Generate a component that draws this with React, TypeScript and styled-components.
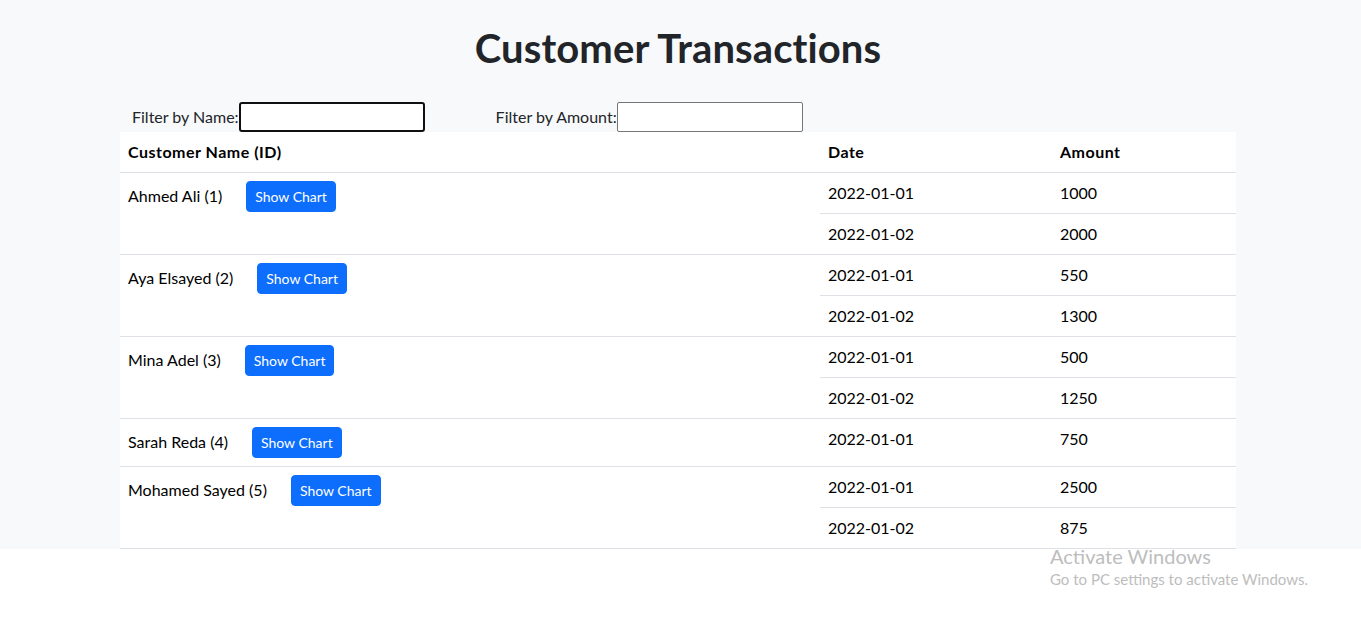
import React from "react";
import styled, { createGlobalStyle } from "styled-components";

const GlobalStyle = createGlobalStyle`
  html, body {
    margin: 0;
    padding: 0;
    background: #ffffff;
  }
  body {
    font-family: "Lato", "Segoe UI", "Liberation Sans", sans-serif;
    font-size: 16px;
    line-height: 24px;
    color: #212529;
  }
  * { box-sizing: border-box; }
`;

const Page = styled.div`
  background: #f8f9fa;
  padding-left: 120px;
  padding-top: 24px;
`;

const Container = styled.div`
  width: 1116px;
`;

const Title = styled.h1`
  margin: 0 0 30px;
  text-align: center;
  font-size: 40px;
  line-height: 48px;
  font-weight: 700;
  letter-spacing: 0.1px;
  color: #212529;
`;

const FilterRow = styled.div`
  display: flex;
  align-items: center;
  gap: 71px;
  padding-left: 12px;
  height: 30px;
`;

const FilterGroup = styled.label`
  display: flex;
  align-items: center;
  color: #212529;
  font-size: 16px;
`;

const FilterInput = styled.input<{ $active?: boolean }>`
  width: 186px;
  height: 30px;
  margin: 0;
  padding: 1px 2px;
  font: inherit;
  background: #ffffff;
  border: ${(p) => (p.$active ? "2px solid #101010" : "1px solid #767676")};
  border-radius: ${(p) => (p.$active ? "3px" : "2px")};
  outline: none;
`;

const Table = styled.table`
  width: 1116px;
  border-collapse: collapse;
  background: #ffffff;
  color: #000000;
  font-size: 16px;
  line-height: 24px;
  vertical-align: top;
`;

const HeadCell = styled.th<{ $width: number }>`
  width: ${(p) => p.$width}px;
  text-align: left;
  font-weight: 700;
  letter-spacing: 0.5px;
  padding: 8px;
  border-bottom: 1px solid #dee2e6;
`;

const Cell = styled.td`
  padding: 8px;
  border-bottom: 1px solid #dee2e6;
  vertical-align: top;
`;

const NameText = styled.span`
  vertical-align: baseline;
`;

const ChartButton = styled.button`
  display: inline-block;
  margin-left: 24px;
  padding: 4px 8px;
  font-family: inherit;
  font-size: 14px;
  line-height: 21px;
  color: #ffffff;
  background: #0d6efd;
  border: 1px solid #0d6efd;
  border-radius: 4px;
  cursor: pointer;
  vertical-align: baseline;
`;

const Watermark = styled.div`
  position: absolute;
  left: 1050px;
  top: 542px;
  color: #bdbdbd;
  font-family: "Lato", "Segoe UI", "Liberation Sans", sans-serif;
  pointer-events: none;
`;

const WatermarkTitle = styled.div`
  font-size: 20px;
  line-height: 28px;
`;

const WatermarkText = styled.div`
  font-size: 15px;
  line-height: 18px;
`;

type Tx = { date: string; amount: number };
type Customer = { id: number; name: string; txs: Tx[] };

const customers: Customer[] = [
  { id: 1, name: "Ahmed Ali", txs: [{ date: "2022-01-01", amount: 1000 }, { date: "2022-01-02", amount: 2000 }] },
  { id: 2, name: "Aya Elsayed", txs: [{ date: "2022-01-01", amount: 550 }, { date: "2022-01-02", amount: 1300 }] },
  { id: 3, name: "Mina Adel", txs: [{ date: "2022-01-01", amount: 500 }, { date: "2022-01-02", amount: 1250 }] },
  { id: 4, name: "Sarah Reda", txs: [{ date: "2022-01-01", amount: 750 }] },
  { id: 5, name: "Mohamed Sayed", txs: [{ date: "2022-01-01", amount: 2500 }, { date: "2022-01-02", amount: 875 }] },
];

export default function App() {
  return (
    <>
      <GlobalStyle />
      <Page>
        <Container>
          <Title>Customer Transactions</Title>
          <FilterRow>
            <FilterGroup>
              Filter by Name:
              <FilterInput type="text" $active />
            </FilterGroup>
            <FilterGroup>
              Filter by Amount:
              <FilterInput type="number" />
            </FilterGroup>
          </FilterRow>
          <Table>
            <thead>
              <tr>
                <HeadCell $width={700}>Customer Name (ID)</HeadCell>
                <HeadCell $width={232}>Date</HeadCell>
                <HeadCell $width={184}>Amount</HeadCell>
              </tr>
            </thead>
            <tbody>
              {customers.map((c) =>
                c.txs.map((t, i) => (
                  <tr key={`${c.id}-${i}`}>
                    {i === 0 && (
                      <Cell rowSpan={c.txs.length}>
                        <NameText>
                          {c.name} ({c.id})
                        </NameText>
                        <ChartButton type="button">Show Chart</ChartButton>
                      </Cell>
                    )}
                    <Cell>{t.date}</Cell>
                    <Cell>{t.amount}</Cell>
                  </tr>
                ))
              )}
            </tbody>
          </Table>
        </Container>
      </Page>
      <Watermark>
        <WatermarkTitle>Activate Windows</WatermarkTitle>
        <WatermarkText>Go to PC settings to activate Windows.</WatermarkText>
      </Watermark>
    </>
  );
}
